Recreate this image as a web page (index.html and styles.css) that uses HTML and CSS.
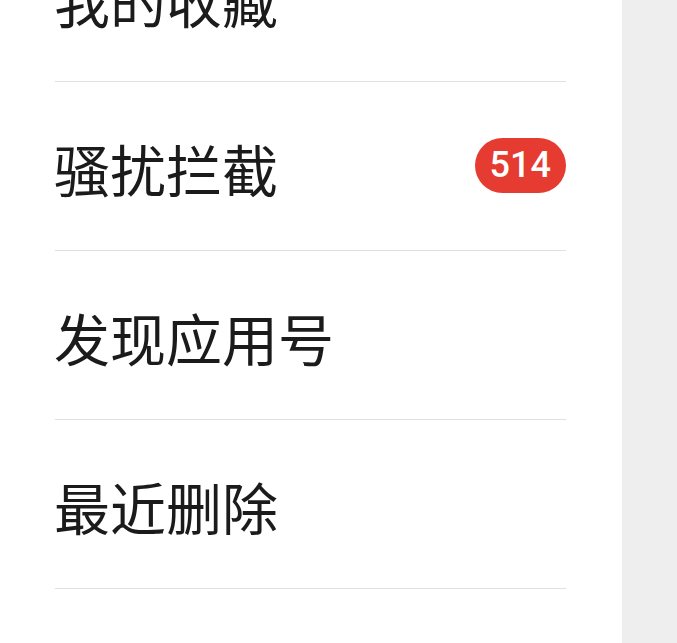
FILE: index.html
```html
<!DOCTYPE html>
<html lang="zh">
<head>
<meta charset="utf-8">
<link rel="stylesheet" href="styles.css">
</head>
<body>
<div class="panel">
  <ul class="menu">
    <li class="row"><span class="label">我的收藏</span></li>
    <li class="row"><span class="label">骚扰拦截</span><span class="badge">514</span></li>
    <li class="row"><span class="label">发现应用号</span></li>
    <li class="row"><span class="label">最近删除</span></li>
  </ul>
</div>
<div class="side"></div>
</body>
</html>
```
FILE: styles.css
```css
html, body {
  margin: 0;
  padding: 0;
  height: 100%;
}
body {
  display: flex;
  overflow: hidden;
  background: #ffffff;
}
.panel {
  width: 622px;
  flex: none;
  background: #ffffff;
}
.side {
  flex: 1;
  background: #eeeeee;
}
.menu {
  list-style: none;
  margin: -87px 0 0 55px;
  padding: 0;
  width: 511px;
}
.row {
  height: 168px;
  border-bottom: 1px solid #e0e0e0;
  display: flex;
  align-items: center;
  justify-content: space-between;
}
.label {
  font-family: "Noto Sans CJK SC", "Noto Sans", sans-serif;
  font-size: 56px;
  line-height: 1;
  color: #1b1b1b;
  margin-left: -1px;
  margin-top: 4px;
}
.badge {
  height: 55px;
  padding: 0 15px;
  min-width: 61px;
  border-radius: 28px;
  background: #e63b30;
  color: #ffffff;
  font-family: Roboto, "Noto Sans", sans-serif;
  font-size: 36px;
  font-weight: 500;
  display: flex;
  align-items: center;
  justify-content: center;
  margin-top: -2px;
}
```
